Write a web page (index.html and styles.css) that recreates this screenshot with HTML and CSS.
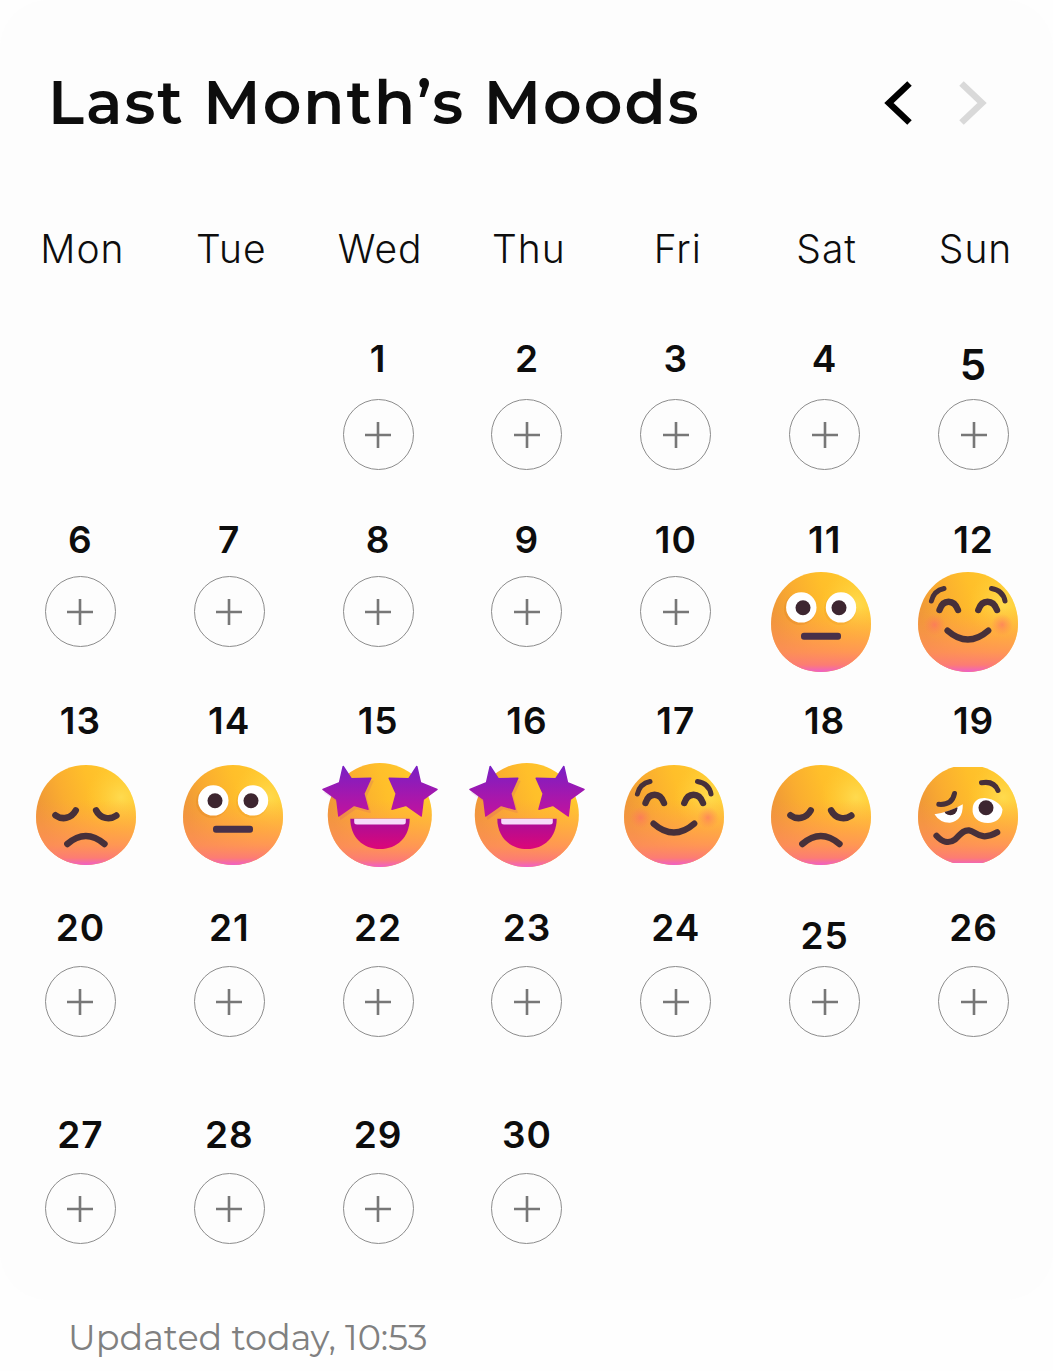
FILE: index.html
```html
<!DOCTYPE html>
<html lang="en">
<head>
<meta charset="utf-8">
<meta name="viewport" content="width=device-width, initial-scale=1">
<title>Last Month’s Moods</title>
<link rel="stylesheet" href="styles.css">
</head>
<body>
<svg class="sprite" aria-hidden="true">
  <defs>
    <linearGradient id="skin" x1="0" y1="0.4" x2="0.9" y2="0.1">
      <stop offset="0" stop-color="#ee9638"/>
      <stop offset="0.3" stop-color="#faad30"/>
      <stop offset="0.6" stop-color="#ffbf2a"/>
      <stop offset="1" stop-color="#ffca2e"/>
    </linearGradient>
    <linearGradient id="blush" x1="0" y1="0" x2="0" y2="1">
      <stop offset="0.35" stop-color="#ff9a4a" stop-opacity="0"/>
      <stop offset="0.8" stop-color="#ff8c5e" stop-opacity="0.8"/>
      <stop offset="0.93" stop-color="#fc7c74"/>
      <stop offset="1" stop-color="#ef5fc8"/>
    </linearGradient>
    <radialGradient id="shine" cx="0.85" cy="0.32" r="0.35">
      <stop offset="0" stop-color="#ffe561" stop-opacity="0.65"/>
      <stop offset="1" stop-color="#ffd23c" stop-opacity="0"/>
    </radialGradient>
    <radialGradient id="cheek">
      <stop offset="0" stop-color="#ff6a6a" stop-opacity="0.6"/>
      <stop offset="1" stop-color="#ff7a5a" stop-opacity="0"/>
    </radialGradient>
    <linearGradient id="star" x1="0" y1="0" x2="0" y2="1">
      <stop offset="0" stop-color="#7a1fc4"/>
      <stop offset="1" stop-color="#c3129d"/>
    </linearGradient>
    <linearGradient id="laugh" x1="0" y1="0" x2="0" y2="1">
      <stop offset="0" stop-color="#a60f9b"/>
      <stop offset="1" stop-color="#dc0678"/>
    </linearGradient>
    <path id="head" d="M58 2C87 2 108 25 108 54C108 82 85 102 58 102S8 82 8 54C8 25 29 2 58 2Z"/>
    <clipPath id="crop"><path d="M0 4H116V100H0Z"/></clipPath>
    <clipPath id="lid"><path d="M24 51Q40 49 53 41V64H24Z"/></clipPath>
    <g id="face">
      <use href="#head" fill="url(#skin)"/>
      <use href="#head" fill="url(#shine)"/>
      <use href="#head" fill="url(#blush)"/>
    </g>
    <path id="star-eye" d="M21.2 3.5L29.2 15.7L48.8 15.2L41.8 30.7L46 46.2L31.8 42.4L16.8 53L14.8 36.4L1 26.4L17.5 19.7Z" fill="url(#star)" stroke="url(#star)" stroke-width="1.5" stroke-linejoin="round"/>
  </defs>
  <symbol id="neutral" viewBox="0 0 116 104">
    <use href="#face"/>
    <circle cx="37" cy="39" r="16" fill="#d97d1c" opacity="0.25"/>
    <circle cx="77" cy="39" r="16" fill="#d97d1c" opacity="0.15"/>
    <circle cx="38.3" cy="37.4" r="15.2" fill="#fff"/>
    <circle cx="78" cy="37.4" r="15.2" fill="#fff"/>
    <circle cx="40" cy="37.7" r="7.5" fill="#3d2630"/>
    <circle cx="76" cy="37.7" r="7.5" fill="#3d2630"/>
    <rect x="38" y="62.8" width="40" height="7" rx="3" fill="#47304a"/>
  </symbol>
  <symbol id="happy" viewBox="0 0 116 104">
    <use href="#face"/>
    <circle cx="24.5" cy="54.7" r="11" fill="url(#cheek)"/>
    <circle cx="92" cy="54.7" r="11" fill="url(#cheek)"/>
    <g fill="none" stroke="#47303a" stroke-linecap="round">
      <path stroke-width="5" d="M21.4 31Q24 20.500 34 18.500M81.5 18.500Q93 20.500 95 31"/>
      <path stroke-width="6.4" d="M29.500 40C33 29 44 29 48 40M68.300 40C72 29 83 29 87 40"/>
      <path stroke-width="6.2" d="M37.500 60.600Q57.800 78.500 78.300 60.600"/>
    </g>
  </symbol>
  <symbol id="sad" viewBox="0 0 116 104">
    <use href="#face"/>
    <g fill="none" stroke="#47303a" stroke-linecap="round">
      <path stroke-width="6.6" d="M27.500 52.300C34 57 43 56 47.700 47.500M68.200 47.500C72.500 56 82 57 88.300 52.600"/>
      <path stroke-width="6.4" d="M39.300 81Q57.800 65 76.500 81"/>
    </g>
  </symbol>
  <symbol id="starstruck" viewBox="0 0 116 104">
    <circle cx="57.8" cy="52" r="52" fill="url(#skin)"/>
    <circle cx="57.8" cy="52" r="52" fill="url(#blush)"/>
    <use href="#star-eye" x="2" y="3" opacity="0.12"/>
    <use href="#star-eye"/>
    <use href="#star-eye" transform="matrix(-1 0 0 1 116 0)"/>
    <path d="M28.3 55.7H87.7C87.7 74 75 86 58 86S28.3 74 28.3 55.7Z" fill="url(#laugh)"/>
    <path d="M32.2 55.7H83.8V59Q83.8 61.5 81 61.5H35Q32.2 61.5 32.2 59Z" fill="#f5dcfa"/>
  </symbol>
  <symbol id="woozy" viewBox="0 0 116 104">
    <g clip-path="url(#crop)"><use href="#face"/></g>
    <path d="M24.5 51.3Q40 49 52.8 41.3Q53 58 40 59.7Q30 60 24.5 51.3Z" fill="#fff"/>
    <circle cx="40.4" cy="45.3" r="7" fill="#3d2630" clip-path="url(#lid)"/>
    <path d="M62.6 46C63 37 70 34.5 76 35.2C84 36 91 41 92.5 46.5C92 55 86 60 78 60C68 60 62 54 62.6 46Z" fill="#fff"/>
    <circle cx="76" cy="44.8" r="7.5" fill="#3d2630"/>
    <g fill="none" stroke="#47303a" stroke-linecap="round" stroke-linejoin="round">
      <path stroke-width="5" d="M28.8 41.3C38 42 43 38 44.500 30.500M71.500 19.800Q84 17.500 88 27.500"/>
      <path stroke-width="6.2" d="M26.500 72.800C32 79 39 81 45 76.500C50 72.500 52 67 59 67.300C66 68 70 79 87.200 69.300"/>
    </g>
  </symbol>
  <symbol id="plus" viewBox="0 0 26 26">
    <path d="M13 0V26M0 13H26" fill="none" stroke="#777" stroke-width="2.6"/>
  </symbol>
</svg>

<main class="card">
  <header class="header">
    <h1 class="title">Last Month’s Moods</h1>
    <nav class="pager" aria-label="Month">
      <button class="pager-button" type="button" aria-label="Previous month">
        <svg class="chevron" viewBox="0 0 28 44" aria-hidden="true"><path d="M25.5 2.5L5 22L25.5 41.5"/></svg>
      </button>
      <button class="pager-button" type="button" aria-label="Next month" disabled>
        <svg class="chevron" viewBox="0 0 28 44" aria-hidden="true"><path d="M2.5 2.5L23 22L2.5 41.5"/></svg>
      </button>
    </nav>
  </header>

  <table class="calendar">
    <thead>
      <tr>
        <th scope="col">Mon</th><th scope="col">Tue</th><th scope="col">Wed</th><th scope="col">Thu</th><th scope="col">Fri</th><th scope="col">Sat</th><th scope="col">Sun</th>
      </tr>
    </thead>
    <tbody>
      <tr class="week week-first">
        <td></td>
        <td></td>
        <td><span class="date">1</span><button class="add" type="button" aria-label="Add mood for 1"><svg class="plus"><use href="#plus"/></svg></button></td>
        <td><span class="date">2</span><button class="add" type="button" aria-label="Add mood for 2"><svg class="plus"><use href="#plus"/></svg></button></td>
        <td><span class="date">3</span><button class="add" type="button" aria-label="Add mood for 3"><svg class="plus"><use href="#plus"/></svg></button></td>
        <td><span class="date">4</span><button class="add" type="button" aria-label="Add mood for 4"><svg class="plus"><use href="#plus"/></svg></button></td>
        <td><span class="date date-low date-large">5</span><button class="add" type="button" aria-label="Add mood for 5"><svg class="plus"><use href="#plus"/></svg></button></td>
      </tr>
      <tr class="week week-close">
        <td><span class="date">6</span><button class="add" type="button" aria-label="Add mood for 6"><svg class="plus"><use href="#plus"/></svg></button></td>
        <td><span class="date">7</span><button class="add" type="button" aria-label="Add mood for 7"><svg class="plus"><use href="#plus"/></svg></button></td>
        <td><span class="date">8</span><button class="add" type="button" aria-label="Add mood for 8"><svg class="plus"><use href="#plus"/></svg></button></td>
        <td><span class="date">9</span><button class="add" type="button" aria-label="Add mood for 9"><svg class="plus"><use href="#plus"/></svg></button></td>
        <td><span class="date">10</span><button class="add" type="button" aria-label="Add mood for 10"><svg class="plus"><use href="#plus"/></svg></button></td>
        <td><span class="date">11</span><svg class="mood" role="img" aria-label="Neutral"><use href="#neutral"/></svg></td>
        <td><span class="date">12</span><svg class="mood" role="img" aria-label="Happy"><use href="#happy"/></svg></td>
      </tr>
      <tr class="week week-tall">
        <td><span class="date">13</span><svg class="mood" role="img" aria-label="Sad"><use href="#sad"/></svg></td>
        <td><span class="date">14</span><svg class="mood" role="img" aria-label="Neutral"><use href="#neutral"/></svg></td>
        <td><span class="date">15</span><svg class="mood" role="img" aria-label="Excited"><use href="#starstruck"/></svg></td>
        <td><span class="date">16</span><svg class="mood" role="img" aria-label="Excited"><use href="#starstruck"/></svg></td>
        <td><span class="date">17</span><svg class="mood" role="img" aria-label="Happy"><use href="#happy"/></svg></td>
        <td><span class="date">18</span><svg class="mood" role="img" aria-label="Sad"><use href="#sad"/></svg></td>
        <td><span class="date">19</span><svg class="mood" role="img" aria-label="Woozy"><use href="#woozy"/></svg></td>
      </tr>
      <tr class="week week-tall">
        <td><span class="date">20</span><button class="add" type="button" aria-label="Add mood for 20"><svg class="plus"><use href="#plus"/></svg></button></td>
        <td><span class="date">21</span><button class="add" type="button" aria-label="Add mood for 21"><svg class="plus"><use href="#plus"/></svg></button></td>
        <td><span class="date">22</span><button class="add" type="button" aria-label="Add mood for 22"><svg class="plus"><use href="#plus"/></svg></button></td>
        <td><span class="date">23</span><button class="add" type="button" aria-label="Add mood for 23"><svg class="plus"><use href="#plus"/></svg></button></td>
        <td><span class="date">24</span><button class="add" type="button" aria-label="Add mood for 24"><svg class="plus"><use href="#plus"/></svg></button></td>
        <td><span class="date date-low">25</span><button class="add" type="button" aria-label="Add mood for 25"><svg class="plus"><use href="#plus"/></svg></button></td>
        <td><span class="date">26</span><button class="add" type="button" aria-label="Add mood for 26"><svg class="plus"><use href="#plus"/></svg></button></td>
      </tr>
      <tr class="week">
        <td><span class="date">27</span><button class="add" type="button" aria-label="Add mood for 27"><svg class="plus"><use href="#plus"/></svg></button></td>
        <td><span class="date">28</span><button class="add" type="button" aria-label="Add mood for 28"><svg class="plus"><use href="#plus"/></svg></button></td>
        <td><span class="date">29</span><button class="add" type="button" aria-label="Add mood for 29"><svg class="plus"><use href="#plus"/></svg></button></td>
        <td><span class="date">30</span><button class="add" type="button" aria-label="Add mood for 30"><svg class="plus"><use href="#plus"/></svg></button></td>
        <td></td>
        <td></td>
        <td></td>
      </tr>
    </tbody>
  </table>
</main>
<footer class="updated">Updated today, 10:53</footer>
</body>
</html>
```
FILE: styles.css
```css
* {
  box-sizing: border-box;
}

body {
  margin: 0;
  background: #fefefe;
  color: #0d0d0d;
  font-family: Inter, "Liberation Sans", sans-serif;
}

.sprite {
  position: absolute;
  width: 0;
  height: 0;
}

.card {
  padding: 64px 5px 4px 6px;
  border-radius: 48px;
  background: #fdfdfd;
}

.header {
  display: flex;
  align-items: center;
  justify-content: space-between;
  padding: 0 61px 0 42px;
}

.title {
  margin: 0;
  font-family: Montserrat, Inter, sans-serif;
  font-size: 60px;
  font-weight: 600;
  letter-spacing: 2px;
  line-height: 78px;
}

.pager {
  display: flex;
  gap: 47px;
}

.pager-button {
  padding: 0;
  border: 0;
  background: none;
  color: #000;
  cursor: pointer;
}

.pager-button:disabled {
  color: #d9d9d9;
  cursor: default;
}

.chevron {
  display: block;
  width: 28px;
  height: 44px;
  fill: none;
  stroke: currentColor;
  stroke-width: 6.5;
}

.calendar {
  width: 100%;
  margin-top: 82px;
  border-collapse: collapse;
  table-layout: fixed;
}

.calendar th {
  height: 115px;
  padding: 0 0 0 4px;
  font-size: 39px;
  font-weight: 300;
  letter-spacing: 1px;
  line-height: 50px;
  text-align: center;
  vertical-align: top;
}

.calendar td {
  padding: 0;
  vertical-align: top;
}

.week {
  height: 181px;
}

.week-tall {
  height: 207px;
}

.date {
  display: block;
  height: 40px;
  margin-bottom: 18px;
  font-size: 37px;
  font-weight: 600;
  letter-spacing: 1px;
  line-height: 40px;
  text-align: center;
}

.week-first .date {
  margin-bottom: 20px;
}

.week-close .date {
  margin-bottom: 16px;
}

.date-low {
  padding-top: 8px;
}

.date-large {
  font-size: 42px;
  line-height: 36px;
}

.add {
  display: flex;
  align-items: center;
  justify-content: center;
  width: 71px;
  height: 71px;
  margin: 0 auto;
  padding: 0;
  border: 1px solid #8c8c8c;
  border-radius: 50%;
  background: none;
  cursor: pointer;
}

.plus {
  width: 26px;
  height: 26px;
}

.mood {
  display: block;
  box-sizing: content-box;
  width: 116px;
  height: 104px;
  margin: -36px auto 0;
}

.date:has(+ .mood) {
  margin-bottom: 58px;
}

.week-close .date:has(+ .mood) {
  margin-bottom: 46px;
}

/* Faces are set a little closer together than the buttons. */
.calendar td:nth-child(1) .mood { padding-left: 12px; }
.calendar td:nth-child(2) .mood { padding-left: 8px; }
.calendar td:nth-child(3) .mood { padding-left: 4px; }
.calendar td:nth-child(5) .mood { padding-right: 4px; }
.calendar td:nth-child(6) .mood { padding-right: 8px; }
.calendar td:nth-child(7) .mood { padding-right: 12px; }

.updated {
  padding: 16px 68px 9px;
  color: #808080;
  font-family: Montserrat, Inter, sans-serif;
  font-size: 35px;
  font-weight: 400;
  line-height: 44px;
}
```
